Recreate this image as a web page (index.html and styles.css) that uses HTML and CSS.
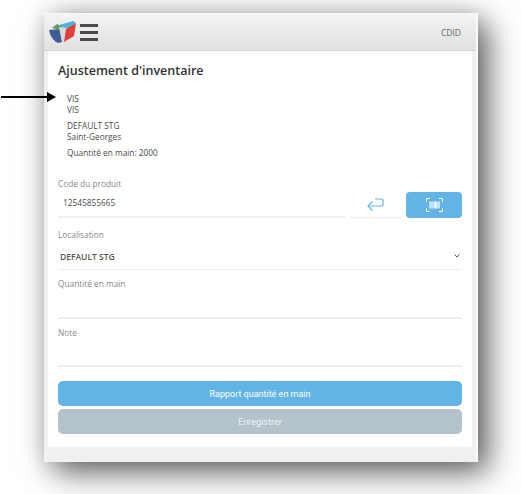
FILE: index.html
```html
<!DOCTYPE html>
<html lang="fr">
<head>
  <meta charset="UTF-8">
  <title>Ajustement d'inventaire</title>
  <link rel="stylesheet" href="styles.css">
</head>
<body>
  <svg class="pointer" width="57" height="12" viewBox="0 0 57 12">
    <path d="M1 6H48" stroke="#000" stroke-width="2" fill="none"/>
    <path d="M47 1L56 6L47 11Z" fill="#000"/>
  </svg>
  <div class="window">
    <header class="topbar">
      <div class="brand">
        <svg class="logo" width="27" height="22" viewBox="0 0 27 22">
          <path d="M10 4L24 0L27 2L17 8Z" fill="#45b4dc"/>
          <path d="M0 9L11 8L13 21L9 22Q2 19 0 9Z" fill="#3d5c98"/>
          <path d="M3 7L8 3L14 6L11 9Z" fill="#5c9c60"/>
          <path d="M10 6L18 7L15 21L13 21Z" fill="#d8dcd8"/>
          <path d="M17 8L27 2L25 15L15 21Z" fill="#e2403c"/>
        </svg>
        <div class="burger"><span></span><span></span><span></span></div>
      </div>
      <span class="user">CDID</span>
    </header>
    <main class="content">
      <h1>Ajustement d'inventaire</h1>
      <div class="info">
        <p>VIS<br>VIS</p>
        <p>DEFAULT STG<br>Saint-Georges</p>
        <p>Quantité en main: 2000</p>
      </div>
      <div class="field code-field">
        <label>Code du produit</label>
        <div class="code-row">
          <div class="code-value">12545855665</div>
          <button class="btn-enter" type="button">
            <svg width="17" height="13" viewBox="0 0 17 13" fill="none" stroke="#62b4e6" stroke-width="1.2">
              <path d="M8 1H15Q16 1 16 2V7Q16 8 15 8H1"/>
              <path d="M5.500 3.500L1 8L5.500 12.500"/>
            </svg>
          </button>
          <button class="btn-scan" type="button">
            <svg width="17" height="14" viewBox="0 0 17 14" fill="none" stroke="#fff">
              <path d="M4 .5H.5V4M13 .5H16.500V4M4 13.500H.5V10M13 13.500H16.500V10"/>
              <path d="M4 3.500V10.500M6 3.500V10.500M8 3.500V10.500M9.500 3.500V10.500M11 3.500V10.500M13 3.500V10.500" stroke-width="1.200"/>
            </svg>
          </button>
        </div>
      </div>
      <div class="field location-field">
        <label>Localisation</label>
        <div class="select-value">
          <span>DEFAULT STG</span>
          <svg width="6" height="4" viewBox="0 0 6 4" fill="none" stroke="#555" stroke-width="1"><path d="M.5 .5L3 3L5.500 .5"/></svg>
        </div>
      </div>
      <div class="field text-field">
        <label>Quantité en main</label>
      </div>
      <div class="field text-field note-field">
        <label>Note</label>
      </div>
      <div class="actions">
        <button class="btn btn-blue" type="button">Rapport quantité en main</button>
        <button class="btn btn-gray" type="button">Enregistrer</button>
      </div>
    </main>
  </div>
</body>
</html>
```

FILE: styles.css
```css
html, body {
  height: 100%;
}

body {
  position: relative;
  box-sizing: border-box;
  margin: 0;
  padding: 13px 43px 0 44px;
  overflow: hidden;
  background-color: #ffffff;
  font-family: "Open Sans", Arial, sans-serif;
  color: #4a4a4a;
}

.pointer {
  position: absolute;
  left: 0;
  top: 91px;
  z-index: 2;
}

.window {
  display: flex;
  flex-direction: column;
  height: 449px;
  background: #f0f0f0;
  border-top: 1px solid #fafafa;
  border-right: 2px solid #fafafa;
  box-sizing: border-box;
  box-shadow: 10px 10px 30px rgba(0, 0, 0, 0.62), 0 0 22px rgba(0, 0, 0, 0.12);
}

.topbar {
  display: flex;
  justify-content: space-between;
  align-items: center;
  height: 37px;
  flex-shrink: 0;
  padding: 0 15px 0 5px;
  background: linear-gradient(#f3f3f3, #e0e0e0);
  border-bottom: 1px solid #d4d4d4;
  box-sizing: border-box;
}

.brand {
  display: flex;
  align-items: center;
  gap: 4px;
}

.burger {
  display: flex;
  flex-direction: column;
  gap: 4px;
  width: 18px;
}

.burger span {
  height: 3px;
  background-color: #4a4a4a;
}

.user {
  font-size: 8.5px;
  color: #666;
}

.content {
  flex: 1;
  margin: 0 4px 15px 4px;
  padding: 0 10px;
  background: #ffffff;
}

h1 {
  margin: 0;
  padding-top: 11px;
  height: 27px;
  font-size: 12.500px;
  line-height: 17px;
  font-weight: 600;
  color: #333;
}

.info {
  padding: 4px 0 0 9px;
  height: 89px;
  box-sizing: border-box;
  font-size: 8.300px;
  line-height: 11px;
}

.info p {
  margin: 0 0 5px;
}

.field label {
  display: block;
  font-size: 8.300px;
  line-height: 12px;
  color: #888;
}

.code-field {
  height: 51px;
}

.code-row {
  display: flex;
  align-items: flex-end;
  height: 27px;
  margin-top: 1px;
}

.code-value {
  flex: 1;
  height: 25px;
  padding-left: 5px;
  border-bottom: 2px solid #f0f0f0;
  font-size: 8.300px;
  line-height: 24px;
}

.btn-enter, .btn-scan {
  display: flex;
  justify-content: center;
  align-items: center;
  width: 56px;
  height: 26px;
  padding: 0;
  border: none;
  border-radius: 4px;
}

.btn-enter {
  width: 55px;
  margin: 0 3px;
  background: #ffffff;
  border-bottom: 1px solid #eeeeee;
}

.btn-scan {
  background-color: #62b4e6;
}

.location-field {
  height: 41px;
  border-bottom: 1px solid #eaeaea;
  box-sizing: border-box;
}

.select-value {
  display: flex;
  justify-content: space-between;
  align-items: center;
  height: 24px;
  margin-top: 3px;
  padding: 0 2px;
  font-size: 8.500px;
  font-weight: 600;
  color: #555;
}

.text-field {
  height: 49px;
  padding-top: 8px;
  border-bottom: 2px solid #eeeeee;
  box-sizing: border-box;
}

.note-field {
  height: 48px;
}

.actions {
  display: flex;
  flex-direction: column;
  gap: 3px;
  margin-top: 14px;
}

.btn {
  height: 25px;
  border: none;
  border-radius: 5px;
  font-family: Roboto, Arial, sans-serif;
  font-size: 9px;
  font-weight: 400;
  color: #ffffff;
}

.btn-blue {
  background-color: #62b4e6;
}

.btn-gray {
  background-color: #b4c2cb;
  color: #f0f3f5;
}
```
